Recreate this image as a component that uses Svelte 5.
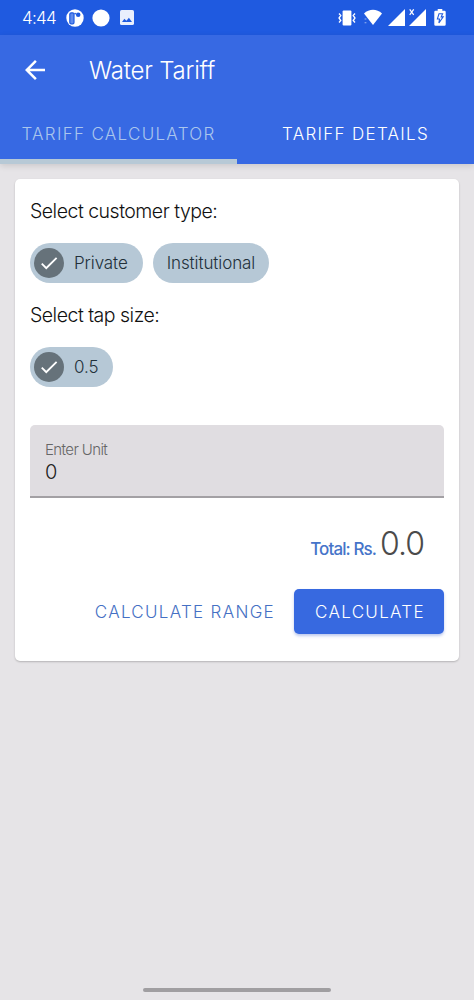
<script>
	const tabs = ['Tariff Calculator', 'Tariff Details'];
	const customerTypes = ['Private', 'Institutional'];
	const tapSizes = ['0.5'];

	let activeTab = $state(0);
	let customer = $state('Private');
	let tapSize = $state('0.5');
	let unit = $state('0');
	let total = $state(0);
</script>

{#snippet chip(label, selected, onclick)}
	<button class="chip" class:selected {onclick}>
		{#if selected}
			<span class="check">
				<svg width="22" height="22" viewBox="0 0 24 24" fill="currentColor"><path d="M9 16.2 4.8 12l-1.4 1.4L9 19 21 7l-1.4-1.4z"/></svg>
			</span>
		{/if}
		<span>{label}</span>
	</button>
{/snippet}

<div class="screen">
	<div class="status">
		<span class="time">4:44</span>
		<svg class="s-app" width="18" height="18" viewBox="0 0 18 18">
			<circle cx="9" cy="9" r="8.7" fill="#fff"/>
			<rect x="3.8" y="3.8" width="4.2" height="11" rx="1.4" fill="#5f8bed" stroke="#1f5be0" stroke-width="1.2"/>
			<circle cx="12.2" cy="5.8" r="2.3" fill="#1f5be0"/>
			<circle cx="9.1" cy="4.6" r=".9" fill="#1f5be0"/>
		</svg>
		<svg class="s-dot" width="18" height="18" viewBox="0 0 18 18"><circle cx="9" cy="9" r="8.6" fill="#fff"/></svg>
		<svg class="s-img" width="14" height="15" viewBox="0 0 14 15">
			<rect width="14" height="15" rx="1.6" fill="#e9effd"/>
			<path d="M2 12 4.4 8.700l1.900 2 1-1 1.600-2L12 12z" fill="#1f5be0"/>
		</svg>
		<span class="spacer"></span>
		<svg width="18" height="16" viewBox="0 0 18 16" fill="none" stroke="#fff" stroke-width="1.3">
			<rect x="4.6" y=".5" width="8.8" height="15" rx="1" fill="#fff" stroke="none"/>
			<path d="m1 3.5 1.800 2L1 8l1.800 2.500L1 12.500M17 3.500l-1.800 2L17 8l-1.800 2.500 1.800 2"/>
		</svg>
		<svg class="s-wifi" width="20" height="17" viewBox="0 0 20 17" fill="#fff">
			<path d="M1 4.400C6.200-.4 13.800-.4 19 4.400L10 16z"/>
			<path d="M1.600 9.400h1.800v1H1.600zm0 3.800h1.800v1H1.600z" opacity=".55"/>
		</svg>
		<svg class="s-sig" width="17" height="17" viewBox="0 0 17 17" fill="#fff"><path d="M17 0v17H0z"/></svg>
		<svg class="s-sigx" width="17" height="17" viewBox="0 0 17 17" fill="#fff">
			<path d="M17 0v17H0z"/>
			<path d="m.7.300 4 5.600M4.700.300l-4 5.600" stroke="#fff" stroke-width="1.200"/>
		</svg>
		<svg class="s-bat" width="12" height="17" viewBox="0 0 12 17">
			<path d="M3.700 0h4.600v1.800h2.200q1.200 0 1.200 1.200v12.600q0 1.200-1.200 1.200h-9q-1.200 0-1.200-1.200V3q0-1.200 1.200-1.200h2.200z" fill="#fff"/>
			<path d="M5 4.700h3.600L7.200 7.900h2L4.900 14l.6-4H3.400z" fill="none" stroke="#1f5be0" stroke-width="1.100"/>
		</svg>
	</div>

	<header>
		<div class="toolbar">
			<button class="back" aria-label="Back">
				<svg width="30" height="30" viewBox="0 0 24 24" fill="currentColor"><path d="M20 11H7.830l5.590-5.590L12 4l-8 8 8 8 1.410-1.410L7.830 13H20z"/></svg>
			</button>
			<h1>Water Tariff</h1>
		</div>
		<nav>
			{#each tabs as tab, i}
				<button class="tab" class:active={activeTab === i} onclick={() => (activeTab = i)}>{tab}</button>
			{/each}
		</nav>
	</header>

	<main>
		<section class="card">
			<h2>Select customer type:</h2>
			<div class="chips">
				{#each customerTypes as name}
					{@render chip(name, customer === name, () => (customer = name))}
				{/each}
			</div>
			<h2 class="size">Select tap size:</h2>
			<div class="chips">
				{#each tapSizes as size}
					{@render chip(size, tapSize === size, () => (tapSize = size))}
				{/each}
			</div>

			<label class="field">
				<span>Enter Unit</span>
				<input bind:value={unit} inputmode="numeric" />
			</label>

			<div class="total">
				<span class="total-label">Total: Rs.</span>
				<span class="total-value">{total.toFixed(1)}</span>
			</div>

			<div class="actions">
				<button class="text-btn">Calculate Range</button>
				<button class="solid-btn">Calculate</button>
			</div>
		</section>
	</main>

	<div class="home-bar"></div>
</div>

<style>
	:global(body) { margin: 0; }

	.screen {
		width: 474px; height: 1000px; overflow: hidden;
		display: flex; flex-direction: column;
		background: #e6e4e7;
		font-family: Inter, "Liberation Sans", sans-serif;
		font-weight: 300;
	}

	button { font: inherit; border: none; background: none; padding: 0; cursor: pointer; }
	svg { display: block; flex: none; }
	h1, h2 { margin: 0; font-weight: 300; white-space: nowrap; }

	.status {
		height: 35px; box-sizing: border-box; padding: 0 28px 0 22px;
		display: flex; align-items: center;
		background: #1f5ae0; color: #fff;
	}
	.time { width: 44px; font-size: 17px; letter-spacing: -0.7px; }
	.s-dot { margin-left: 8px; }
	.s-img { margin-left: 10px; }
	.spacer { flex: 1; }
	.s-wifi { margin-left: 7px; }
	.s-sig { margin-left: 5px; }
	.s-sigx { margin-left: 4px; }
	.s-bat { margin-left: 8px; }

	header {
		height: 129px; position: relative; z-index: 1;
		display: flex; flex-direction: column;
		background: #3769e3; color: #fff;
		box-shadow: 0 2px 6px rgba(0, 0, 0, 0.12);
	}
	.toolbar { height: 70px; display: flex; align-items: center; padding-left: 20px; }
	.back { width: 69px; color: #fff; }
	h1 { font-size: 24px; letter-spacing: -0.2px; }

	nav { flex: 1; display: flex; }
	.tab {
		flex: 1; box-sizing: border-box; padding-top: 4px;
		border-bottom: 5px solid transparent;
		font-size: 17px; letter-spacing: 1.3px; text-transform: uppercase;
		color: #fff;
	}
	.tab.active { color: #aac6ed; border-bottom-color: #b7c9d6; }

	main { flex: 1; padding: 15px; }
	.card {
		height: 482px; box-sizing: border-box; padding: 19px 15px 0;
		background: #fff; border-radius: 5px;
		box-shadow: 0 1px 2px rgba(0, 0, 0, 0.22);
	}
	h2 { font-size: 19.5px; line-height: 26px; color: #111; letter-spacing: -0.5px; }
	h2.size { margin-top: 19px; }

	.chips { display: flex; gap: 10px; margin-top: 19px; }
	.chip {
		height: 40px; padding: 0 14px; border-radius: 20px;
		display: flex; align-items: center;
		background: #b6c8d6; color: #22303a;
		font-size: 17px; letter-spacing: -0.1px;
	}
	.chip.selected { padding-left: 4px; padding-right: 15px; }
	.check {
		width: 30px; height: 30px; margin-right: 10px; border-radius: 50%;
		display: flex; align-items: center; justify-content: center;
		background: #66727a; color: #fff;
	}

	.field {
		height: 73px; box-sizing: border-box; margin-top: 38px; padding: 16px 15px 0;
		display: flex; flex-direction: column;
		background: #e0dde1; border-bottom: 2px solid #a3a0a4;
		border-radius: 5px 5px 0 0;
	}
	.field span { font-size: 15px; line-height: 18px; color: #666; letter-spacing: -0.6px; }
	.field input {
		width: 100%; height: 26px; padding: 0; border: none; outline: none; background: none;
		font: inherit; font-size: 20px; color: #222;
	}

	.total { display: flex; align-items: baseline; justify-content: flex-end; margin-top: 26px; padding-right: 20px; line-height: 40px; }
	.total-label { font-size: 17px; font-weight: 500; color: #4674c9; letter-spacing: -0.9px; margin-right: 4px; }
	.total-value { font-size: 32px; color: #4b4b4b; letter-spacing: -1px; }

	.actions { display: flex; justify-content: flex-end; margin-top: 20px; }
	.actions button { height: 45px; font-size: 17px; letter-spacing: 1.3px; text-transform: uppercase; white-space: nowrap; }
	.text-btn { color: #4570c4; margin-right: 19px; }
	.solid-btn {
		box-sizing: border-box; width: 150px; padding-left: 2px !important;
		color: #fff; background: #3769e0; border-radius: 5px;
		box-shadow: 0 2px 3px rgba(40, 80, 200, 0.3);
	}

	.home-bar { width: 188px; height: 4px; margin: 0 auto 8px; border-radius: 2px; background: #a09ea1; }
</style>
